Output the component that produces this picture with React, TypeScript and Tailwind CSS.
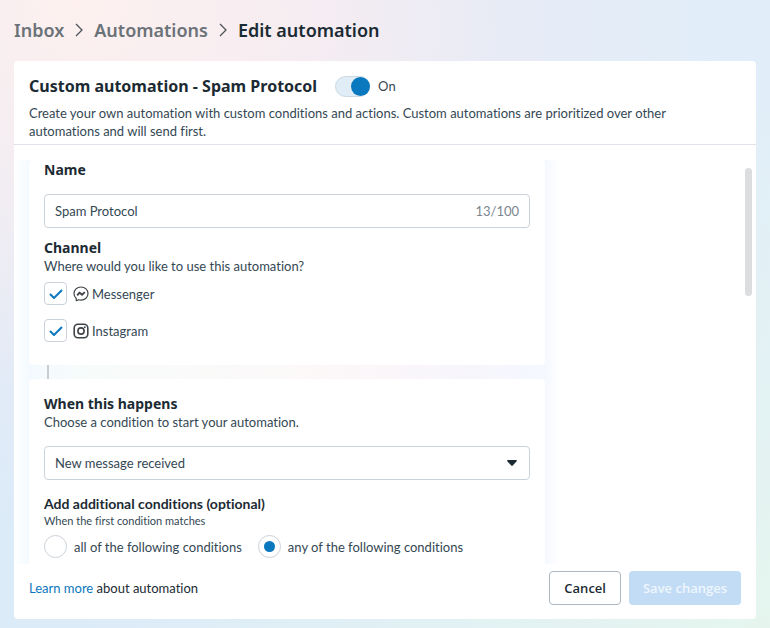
import { useState, type ReactNode } from "react";

const channels = [
  { id: "messenger", label: "Messenger", icon: <MessengerIcon /> },
  { id: "instagram", label: "Instagram", icon: <InstagramIcon /> },
];

const matchOptions = [
  { id: "all", label: "all of the following conditions" },
  { id: "any", label: "any of the following conditions" },
];

function MessengerIcon() {
  return (
    <svg viewBox="0 0 16 16" className="h-4 w-4" fill="none" stroke="#3f4447" aria-hidden="true">
      <path
        d="M8 1C4 1 1 3.9 1 7.6c0 2 .8 3.7 2.2 4.9l.1 2.2 2.1-.9c.8.3 1.7.4 2.6.4 4 0 7-2.9 7-6.6S12 1 8 1Z"
        strokeWidth="1.2"
        strokeLinejoin="round"
      />
      <path d="M4.2 9.3 6.6 6.6 9 8.7l2.8-2.6" strokeWidth="1.9" strokeLinejoin="round" />
    </svg>
  );
}

function InstagramIcon() {
  return (
    <svg viewBox="0 0 16 16" className="h-4 w-4" fill="none" stroke="#3f4447" aria-hidden="true">
      <rect x="1.2" y="1.2" width="13.6" height="13.6" rx="3.8" strokeWidth="1.6" />
      <circle cx="8" cy="8" r="3.1" strokeWidth="1.6" />
      <circle cx="11.8" cy="4.2" r="0.9" fill="#3f4447" stroke="none" />
    </svg>
  );
}

function Chevron() {
  return (
    <svg viewBox="0 0 8 14" className="h-3.5 w-2 shrink-0" fill="none" stroke="#4b5359" strokeWidth="1.3" aria-hidden="true">
      <path d="m1 1 6 6-6 6" />
    </svg>
  );
}

function Section({ children }: { children: ReactNode }) {
  return <section className="rounded bg-white px-[15px]">{children}</section>;
}

function Breadcrumb() {
  return (
    <nav aria-label="Breadcrumb" className="shrink-0 px-3.5 py-4">
      <ol className="flex items-center font-['Noto_Sans',sans-serif] text-[18px] leading-7 font-semibold">
        <li>
          <a href="#inbox" className="text-[#6b7278]">Inbox</a>
        </li>
        <li className="mx-[11px]"><Chevron /></li>
        <li>
          <a href="#automations" className="text-[#6b7278]">Automations</a>
        </li>
        <li className="mx-[11px]"><Chevron /></li>
        <li aria-current="page" className="text-[#1c2b33]">Edit automation</li>
      </ol>
    </nav>
  );
}

export default function App() {
  const [enabled, setEnabled] = useState(true);
  const [name, setName] = useState("Spam Protocol");
  const [selected, setSelected] = useState(["messenger", "instagram"]);
  const [match, setMatch] = useState("any");

  const toggleChannel = (id: string) =>
    setSelected((prev) => (prev.includes(id) ? prev.filter((c) => c !== id) : [...prev, id]));

  return (
    <div className="flex h-screen flex-col bg-[radial-gradient(ellipse_at_10%_0%,#fdf0ef_0%,transparent_45%),radial-gradient(ellipse_at_100%_100%,#e5f5ee_0%,transparent_60%),radial-gradient(ellipse_at_30%_10%,#f1e9f3_0%,transparent_65%),linear-gradient(to_right,#dcebf8,#e1eef9)] font-['Lato',sans-serif] text-[13px] leading-[18px] text-[#344854] [font-variant-ligatures:none]">
      <Breadcrumb />

      <main className="mx-3.5 mt-px mb-[9px] flex min-h-0 flex-1 flex-col rounded bg-white">
        <header className="shrink-0 border-b border-[#dfe2e8] px-[15px] pt-3.5 pb-1">
          <div className="flex items-center gap-[18px]">
            <h1 className="font-['Noto_Sans',sans-serif] text-[16px] leading-[22px] font-bold text-[#1c2b33]">
              Custom automation - Spam Protocol
            </h1>
            <label className="flex items-center gap-2">
              <span className="grid items-center">
                <input
                  type="checkbox"
                  role="switch"
                  checked={enabled}
                  onChange={(e) => setEnabled(e.target.checked)}
                  className="peer col-start-1 row-start-1 h-[21px] w-[35px] appearance-none rounded-full border border-[#ccd9e2] bg-[#e0edf6]"
                />
                <span className="pointer-events-none col-start-1 row-start-1 h-[19px] w-[19px] rounded-full bg-[#8a99a5] peer-checked:justify-self-end peer-checked:bg-[#0a78be]" />
              </span>
              <span>{enabled ? "On" : "Off"}</span>
            </label>
          </div>
          <p className="mt-[7px] max-w-[670px]">
            Create your own automation with custom conditions and actions. Custom automations are
            prioritized over other automations and will send first.
          </p>
        </header>

        <div className="relative mt-[15px] min-h-0 flex-1 overflow-hidden">
          <div className="max-w-[546px] bg-[linear-gradient(to_right,#ffffff,#f3faff_15px,#f7fbfa_80px,#fcf8f8_300px,#f8f5fc_440px,#f5f8ff_531px,#ffffff)] px-[15px]">
            <Section>
              <label htmlFor="name" className="block font-['Noto_Sans',sans-serif] text-[14px] leading-5 font-bold text-[#1c2b33]">
                Name
              </label>
              <div className="mt-3.5 flex h-[34px] items-center rounded border border-[#cbd2d9] px-2.5">
                <input
                  id="name"
                  type="text"
                  maxLength={100}
                  value={name}
                  onChange={(e) => setName(e.target.value)}
                  className="min-w-0 flex-1 bg-transparent outline-none"
                />
                <span className="text-[#7b868e]">{name.length}/100</span>
              </div>

              <fieldset className="mt-[11px] pb-[23px]">
                <legend className="font-['Noto_Sans',sans-serif] text-[14px] leading-[18px] font-bold text-[#1c2b33]">
                  Channel
                </legend>
                <p>Where would you like to use this automation?</p>
                <div className="mt-[7px] flex flex-col items-start gap-3.5">
                  {channels.map(({ id, label, icon }) => (
                    <label key={id} className="flex items-center">
                      <span className="grid place-items-center">
                        <input
                          type="checkbox"
                          checked={selected.includes(id)}
                          onChange={() => toggleChannel(id)}
                          className="peer col-start-1 row-start-1 h-[23px] w-[23px] appearance-none rounded border border-[#cbd2d9]"
                        />
                        <svg viewBox="0 0 14 10" className="pointer-events-none invisible col-start-1 row-start-1 h-2.5 w-3.5 peer-checked:visible" fill="none" stroke="#0a78be" strokeWidth="2" aria-hidden="true">
                          <path d="m1 5 4 4 8-8" />
                        </svg>
                      </span>
                      <span className="mr-[3px] ml-1.5">{icon}</span>
                      {label}
                    </label>
                  ))}
                </div>
              </fieldset>
            </Section>

            <div className="ml-[18px] h-3.5 w-0.5 bg-[#c9cdd1]" />

            <Section>
              <label htmlFor="trigger" className="block pt-4 font-['Noto_Sans',sans-serif] text-[14px] leading-[18px] font-bold text-[#1c2b33]">
                When this happens
              </label>
              <p>Choose a condition to start your automation.</p>
              <div className="relative mt-[15px]">
                <select
                  id="trigger"
                  className="block h-[34px] w-full appearance-none rounded border border-[#cbd2d9] bg-white pr-8 pl-2.5"
                >
                  <option>New message received</option>
                </select>
                <svg viewBox="0 0 10 6" className="pointer-events-none absolute top-3.5 right-[13px] h-1.5 w-2.5" fill="#1c2b33" aria-hidden="true">
                  <path d="M.8 0h8.4a.7.7 0 0 1 .5 1.2L5.7 5.6a1 1 0 0 1-1.4 0L.3 1.2A.7.7 0 0 1 .8 0Z" />
                </svg>
              </div>

              <fieldset className="mt-[15px] pb-8">
                <legend className="text-[14px] font-bold text-[#1c2b33]">Add additional conditions (optional)</legend>
                <p className="text-[11px] leading-4">When the first condition matches</p>
                <div className="mt-1.5 flex gap-4">
                  {matchOptions.map(({ id, label }) => (
                    <label key={id} className="flex items-center gap-[7px]">
                      <span className="grid place-items-center">
                        <input
                          type="radio"
                          name="match"
                          checked={match === id}
                          onChange={() => setMatch(id)}
                          className="peer col-start-1 row-start-1 h-[23px] w-[23px] appearance-none rounded-full border border-[#cbd2d9]"
                        />
                        <span className="pointer-events-none invisible col-start-1 row-start-1 h-[11px] w-[11px] rounded-full bg-[#0a78be] peer-checked:visible" />
                      </span>
                      {label}
                    </label>
                  ))}
                </div>
              </fieldset>
            </Section>
          </div>

          {/* scroll thumb */}
          <div className="absolute top-2 right-1 h-32 w-[7px] rounded-full bg-[#dcdddf]" />
        </div>

        <footer className="flex shrink-0 items-center justify-between px-[15px] pt-[7px] pb-3.5">
          <p className="text-[#1c2b33]">
            <a href="#learn-more" className="text-[#0a78be]">Learn more</a> about automation
          </p>
          <div className="flex gap-2 font-['Open_Sans',sans-serif] font-semibold">
            <button type="button" className="h-[34px] rounded border border-[#aeb8c0] px-3.5 text-[#1c2b33]">
              Cancel
            </button>
            <button type="button" disabled className="h-[34px] rounded bg-[#c3dcf5] px-3.5 text-[#eef6fd]">
              Save changes
            </button>
          </div>
        </footer>
      </main>
    </div>
  );
}
